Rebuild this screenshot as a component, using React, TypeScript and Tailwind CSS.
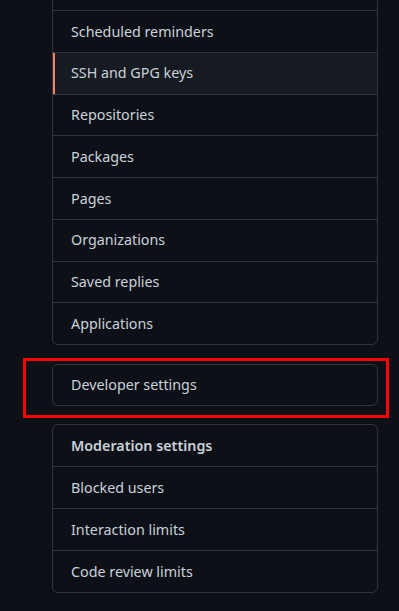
import React from 'react';

const font = { fontFamily: '"Segoe UI", "Noto Sans", "Liberation Sans", sans-serif' };

// first entry sits above the fold, only its bottom edge shows
const mainItems = [
  '',
  'Scheduled reminders',
  'SSH and GPG keys',
  'Repositories',
  'Packages',
  'Pages',
  'Organizations',
  'Saved replies',
  'Applications',
];

const moderationItems = ['Blocked users', 'Interaction limits', 'Code review limits'];

export default function App() {
  const selected = 'SSH and GPG keys';

  return (
    <div className="w-[399px] h-[611px] overflow-hidden bg-[#0d1117] text-[#c9d1d9] text-[14.3px]" style={font}>
      <div className="ml-[52px] w-[326px]">
        <nav className="-mt-[32px] border border-[#30363d] rounded-md overflow-hidden">
          {mainItems.map((label, i) => (
            <a
              key={i}
              className={`relative flex items-center pl-[18px] ${i === 0 ? 'h-[41px]' : 'h-[41.75px] border-t border-[#30363d]'} ${label === selected ? 'bg-[#161b22]' : ''}`}
            >
              {label === selected && <span className="absolute left-0 top-0 bottom-0 w-[2px] bg-[#f78166]" />}
              {label}
            </a>
          ))}
        </nav>

        <div className="relative mt-[19px]">
          <div className="border border-[#30363d] rounded-md h-[42px] flex items-center pl-[18px]">
            Developer settings
          </div>
          <div className="absolute -left-[29px] -right-[11px] -top-[6px] -bottom-[12px] border-[3px] border-[#ff0000]" />
        </div>

        <nav className="mt-[18px] border border-[#30363d] rounded-md overflow-hidden">
          <div className="h-[41px] flex items-center pl-[18px] font-semibold">Moderation settings</div>
          {moderationItems.map(label => (
            <a key={label} className="h-[42px] flex items-center pl-[18px] border-t border-[#30363d]">
              {label}
            </a>
          ))}
        </nav>
      </div>
    </div>
  );
}
